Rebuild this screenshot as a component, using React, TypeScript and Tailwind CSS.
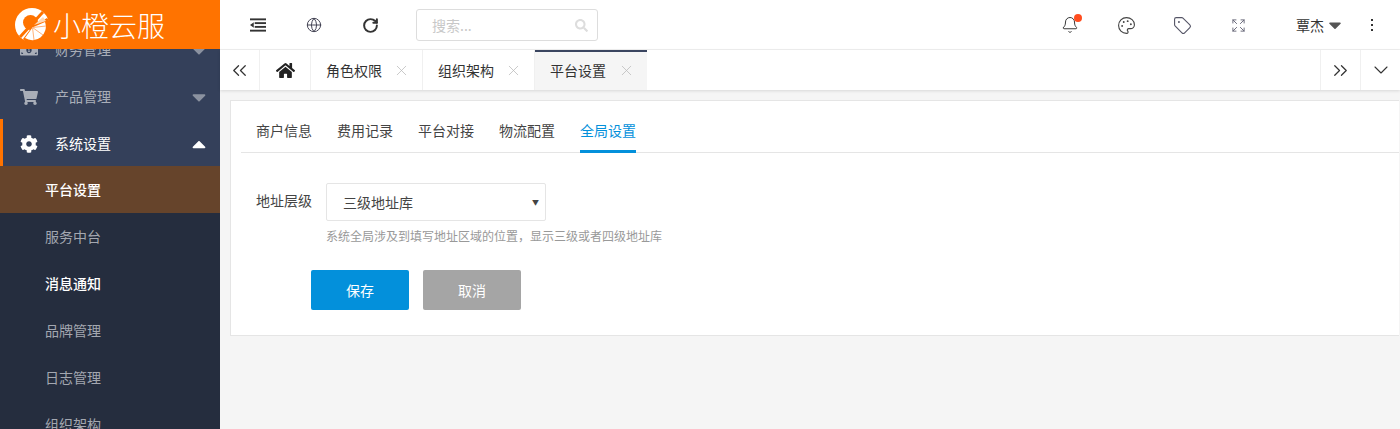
import { FaShoppingCart, FaCog, FaHome, FaSearch, FaMoneyBillAlt, FaCaretDown, FaCaretUp } from "react-icons/fa";
import { Bell, Palette, Tag, Expand, Globe, RotateCw, ChevronsLeft, ChevronsRight, ChevronDown, X } from "lucide-react";

const FONT = "font-['Noto_Sans_CJK_SC','Noto_Sans',sans-serif]";

function Logo() {
  return (
    <svg width="34" height="34" viewBox="0 0 34 34" className="mt-[1px] shrink-0">
      <circle cx="17" cy="17" r="17" fill="#fff" />
      <circle cx="15.5" cy="14.5" r="7.5" fill="#ff7300" />
      <path d="M5 29 L28 4" stroke="#ff7300" strokeWidth="3" />
      <path d="M17 19 L32 10 A15 15 0 0 1 8 31 Z" fill="#ff7300" />
      <path d="M17.5 19.5 L30 14 A13.5 13.5 0 0 1 10 30 Z" fill="#fff" />
      <path d="M17.5 19.5 L31 18 M17.5 19.5 L28 27 M17.5 19.5 L19 32" stroke="#ffb27a" strokeWidth="1" />
      <path d="M19 17 L28 9 L31 13 Z" fill="#ffd9b8" />
    </svg>
  );
}

function SideRow({ icon, label, open, active }: { icon: React.ReactNode; label: string; open?: boolean; active?: boolean }) {
  return (
    <div className={`flex h-[47px] items-center pr-[10px] pt-[2px] ${active ? "border-l-[3px] border-[#ff7300] pl-[17px] text-white" : "pl-[20px] text-[#a9aeb8]"}`}>
      <span className="flex w-[35px] text-[18px]">{icon}</span>
      <span className="flex-1 text-[14px]">{label}</span>
      {open ? <FaCaretUp className="text-[22px] text-white" /> : <FaCaretDown className="text-[22px] text-[#8b92a0]" />}
    </div>
  );
}

function SubRow({ label, tone }: { label: string; tone: string }) {
  return <div className={`flex h-[47px] shrink-0 items-center pl-[45px] text-[14px] ${tone}`}>{label}</div>;
}

function Tab({ label, active }: { label: string; active?: boolean }) {
  return (
    <div className={`flex w-[112px] items-center border-r pl-[15px] pr-[12px] text-[14px] text-[#333] ${active ? "border-t-2 border-r-0 border-t-[#3a4560] bg-[#f5f5f5] pb-[2px] text-[#222]" : "border-[#f0f0f0]"}`}>
      <span className="flex-1">{label}</span>
      <X size={17} strokeWidth={1.1} className="text-[#bbb]" />
    </div>
  );
}

export default function App() {
  return (
    <div className={`flex h-screen w-full overflow-hidden bg-[#f5f5f5] ${FONT}`}>
      <aside className="flex w-[220px] shrink-0 flex-col overflow-hidden bg-[#252d3e]">
        <div className="z-10 flex h-[49px] shrink-0 items-center gap-[4px] bg-[#ff7300] pl-[15px] text-[28px] font-light leading-none text-white">
          <Logo />
          <span>小橙云服</span>
        </div>
        <div className="-mt-[24px] bg-[#34405a]">
          <SideRow icon={<FaMoneyBillAlt />} label="财务管理" />
          <SideRow icon={<FaShoppingCart />} label="产品管理" />
          <SideRow icon={<FaCog />} label="系统设置" open active />
        </div>
        <SubRow label="平台设置" tone="bg-[#66442b] font-medium text-white" />
        <SubRow label="服务中台" tone="text-[#a3a7b0]" />
        <SubRow label="消息通知" tone="font-medium text-white" />
        <SubRow label="品牌管理" tone="text-[#a3a7b0]" />
        <SubRow label="日志管理" tone="text-[#a3a7b0]" />
        <SubRow label="组织架构" tone="text-[#a3a7b0]" />
      </aside>

      <main className="flex min-w-0 flex-1 flex-col">
        <header className="flex h-[50px] shrink-0 items-center border-b border-[#f0f0f0] bg-white pt-[1px] text-[#333]">
          <div className="flex w-[196px] items-center gap-[40px] pl-[30px]">
            <svg width="16" height="14" viewBox="0 0 17 14" fill="#333">
              <rect x="0" y="0" width="17" height="2" />
              <rect x="5" y="4" width="12" height="2" />
              <rect x="5" y="8" width="12" height="2" />
              <rect x="0" y="12" width="17" height="2" />
              <path d="M4 4 L0 7 L4 10 Z" />
            </svg>
            <Globe size={16} strokeWidth={1.5} className="text-[#445]" />
            <RotateCw size={17} strokeWidth={2.8} className="text-[#333]" />
          </div>
          <div className="flex h-[32px] w-[182px] items-center justify-between rounded-[3px] border border-[#ddd] pl-[15px] pr-[9px] text-[14px] text-[#c8c8c8]">
            <span>搜索...</span>
            <FaSearch size={13} className="text-[#ddd]" />
          </div>
          <div className="ml-auto flex items-center">
            <span className="relative mr-[38px]">
              <Bell size={18} strokeWidth={1.3} className="text-[#333]" />
              <span className="absolute -right-[3px] -top-[2px] h-[8px] w-[8px] rounded-full bg-[#ff4d1f]" />
            </span>
            <Palette size={19} strokeWidth={1.4} className="mr-[37px] text-[#444]" />
            <Tag size={19} strokeWidth={1.4} className="mr-[39px] text-[#556]" />
            <Expand size={15} strokeWidth={1.5} className="mr-[50px] text-[#667]" />
            <span className="text-[14px]">覃杰</span>
            <FaCaretDown size={20} className="ml-[1px] mr-[26px] text-[#555]" />
            <span className="mr-[27px] flex flex-col gap-[3px]">
              <i className="h-[2px] w-[2px] bg-[#333]" />
              <i className="h-[2px] w-[2px] bg-[#333]" />
              <i className="h-[2px] w-[2px] bg-[#333]" />
            </span>
          </div>
        </header>

        <nav className="flex h-[40px] shrink-0 bg-white shadow-[0_1px_3px_rgba(0,0,0,0.12)]">
          <div className="flex w-[40px] items-center justify-center border-r border-[#f0f0f0]">
            <ChevronsLeft size={23} strokeWidth={1.3} className="text-[#333]" />
          </div>
          <div className="flex w-[51px] items-center justify-center border-r border-[#f0f0f0] text-[#222]">
            <FaHome size={19} />
          </div>
          <Tab label="角色权限" />
          <Tab label="组织架构" />
          <Tab label="平台设置" active />
          <div className="ml-auto flex w-[40px] items-center justify-center border-l border-[#f0f0f0]">
            <ChevronsRight size={23} strokeWidth={1.3} className="text-[#333]" />
          </div>
          <div className="flex w-[40px] items-center justify-center border-l border-[#f0f0f0]">
            <ChevronDown size={24} strokeWidth={1.1} className="text-[#333]" />
          </div>
        </nav>

        <section className="ml-[10px] mr-[1px] mt-[10px] flex h-[236px] flex-col border border-r-0 border-[#e5e5e5] bg-white pl-[10px]">
          <div className="flex h-[52px] shrink-0 items-end gap-[25px] border-b border-[#e5e5e5] pl-[15px]">
            {["商户信息", "费用记录", "平台对接", "物流配置"].map((t) => (
              <span key={t} className="h-[32px] text-[14px] text-[#444]">{t}</span>
            ))}
            <span className="-mb-px h-[33px] border-b-[3px] border-[#0390db] text-[14px] text-[#0390db]">全局设置</span>
          </div>
          <div className="mt-[30px] flex items-start pl-[15px]">
            <span className="mr-[14px] mt-[7px] text-[14px] text-[#444]">地址层级</span>
            <div>
              <div className="flex h-[38px] w-[220px] items-center justify-between rounded-[2px] border border-[#e5e5e5] pl-[16px] pr-[6px] text-[14px] text-[#444]">
                <span>三级地址库</span>
                <span className="text-[7px] text-[#444]">▼</span>
              </div>
              <p className="mt-[6px] text-[12px] text-[#999]">系统全局涉及到填写地址区域的位置，显示三级或者四级地址库</p>
            </div>
          </div>
          <div className="ml-[70px] mt-[25px] flex gap-[14px]">
            <button className="h-[40px] w-[98px] rounded-[2px] bg-[#0390db] text-[14px] text-white">保存</button>
            <button className="h-[40px] w-[98px] rounded-[2px] bg-[#a5a5a5] text-[14px] text-white">取消</button>
          </div>
        </section>
      </main>
    </div>
  );
}
